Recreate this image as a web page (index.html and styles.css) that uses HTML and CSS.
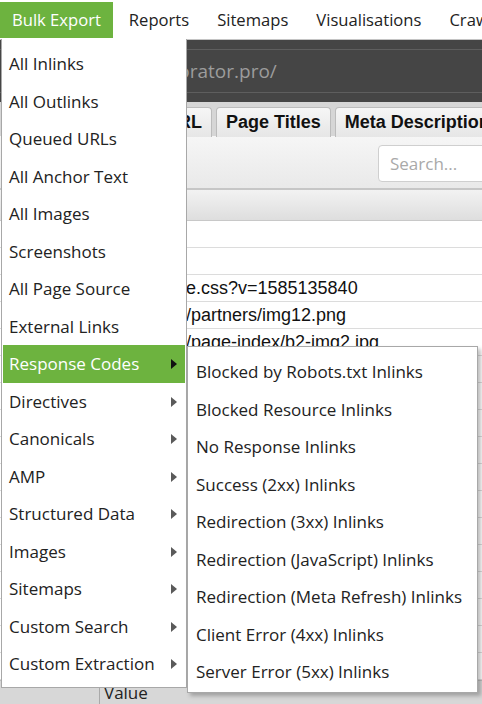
FILE: index.html
```html
<!DOCTYPE html>
<html>
<head>
<meta charset="utf-8">
<link rel="stylesheet" href="styles.css">
</head>
<body>
<div class="app">
  <nav class="menubar">
    <div class="mb-item active">Bulk Export</div>
    <div class="mb-item">Reports</div>
    <div class="mb-item">Sitemaps</div>
    <div class="mb-item">Visualisations</div>
    <div class="mb-item">Crawl Analysis</div>
  </nav>
  <div class="darkbar">
    <div class="address">collaborator.pro/</div>
  </div>
  <div class="tabs">
    <div class="tab">URL</div>
    <div class="tab">Page Titles</div>
    <div class="tab">Meta Description</div>
  </div>
  <div class="toolbar">
    <div class="search">Search...</div>
  </div>
  <div class="thead"></div>
  <div class="rows">
    <div class="row"><span class="num"></span><span class="addr"></span></div>
    <div class="row"><span class="num"></span><span class="addr"></span></div>
    <div class="row"><span class="num"></span><span class="addr">e.css?v=1585135840</span></div>
    <div class="row"><span class="num"></span><span class="addr">/partners/img12.png</span></div>
    <div class="row"><span class="num"></span><span class="addr">/page-index/b2-img2.jpg</span></div>
    <div class="row"><span class="num"></span><span class="addr"></span></div>
    <div class="row"><span class="num"></span><span class="addr"></span></div>
    <div class="row"><span class="num"></span><span class="addr"></span></div>
    <div class="row"><span class="num"></span><span class="addr"></span></div>
    <div class="row"><span class="num"></span><span class="addr"></span></div>
    <div class="row"><span class="num"></span><span class="addr"></span></div>
    <div class="row"><span class="num"></span><span class="addr"></span></div>
    <div class="row"><span class="num"></span><span class="addr"></span></div>
    <div class="row"><span class="num"></span><span class="addr"></span></div>
    <div class="row"><span class="num"></span><span class="addr"></span></div>
    <div class="row"><span class="num"></span><span class="addr"></span></div>
    <div class="row"><span class="num"></span><span class="addr"></span></div>
  </div>
  <div class="lower">
    <div class="lcol name"></div>
    <div class="lcol">Value</div>
  </div>

  <ul class="menu main">
    <li>All Inlinks</li>
    <li>All Outlinks</li>
    <li>Queued URLs</li>
    <li>All Anchor Text</li>
    <li>All Images</li>
    <li>Screenshots</li>
    <li>All Page Source</li>
    <li>External Links</li>
    <li class="sub hl">Response Codes</li>
    <li class="sub">Directives</li>
    <li class="sub">Canonicals</li>
    <li class="sub">AMP</li>
    <li class="sub">Structured Data</li>
    <li class="sub">Images</li>
    <li class="sub">Sitemaps</li>
    <li class="sub">Custom Search</li>
    <li class="sub">Custom Extraction</li>
  </ul>
  <ul class="menu submenu">
    <li>Blocked by Robots.txt Inlinks</li>
    <li>Blocked Resource Inlinks</li>
    <li>No Response Inlinks</li>
    <li>Success (2xx) Inlinks</li>
    <li>Redirection (3xx) Inlinks</li>
    <li>Redirection (JavaScript) Inlinks</li>
    <li>Redirection (Meta Refresh) Inlinks</li>
    <li>Client Error (4xx) Inlinks</li>
    <li>Server Error (5xx) Inlinks</li>
  </ul>
</div>
</body>
</html>
```
FILE: styles.css
```css
html, body {
  margin: 0;
  padding: 0;
  background: #fff;
}
.app {
  position: relative;
  width: 482px;
  height: 704px;
  overflow: hidden;
  font-family: "Open Sans", "Noto Sans", sans-serif;
  color: #222;
}
.menubar {
  display: flex;
  gap: 4px;
  height: 37px;
  padding-top: 2px;
  border-bottom: 1px solid #c4c4c4;
  background: #fff;
  white-space: nowrap;
}
.mb-item {
  padding: 0 12px;
  height: 36px;
  line-height: 36px;
  font-size: 16.6px;
  color: #222;
}
.mb-item.active {
  background: #6db33f;
  color: #fff;
}
.darkbar {
  height: 62px;
  box-sizing: border-box;
  background: #454545;
  padding-top: 9px;
}
.address {
  height: 44px;
  box-sizing: border-box;
  border-top: 1px solid #5e5e5e;
  border-bottom: 1px solid #5e5e5e;
  line-height: 42px;
  padding-left: 126px;
  font-size: 19px;
  color: #9c9c9c;
  white-space: nowrap;
}
.tabs {
  display: flex;
  gap: 4px;
  height: 34px;
  padding: 5px 0 0 155px;
  box-sizing: border-box;
  background: #d6d6d6;
  white-space: nowrap;
}
.tab {
  flex: none;
  height: 29px;
  line-height: 29px;
  padding: 0 9px;
  border: 1px solid #bcbcbc;
  border-bottom: none;
  border-radius: 4px 4px 0 0;
  background: linear-gradient(#f6f6f6, #e6e6e6);
  font-family: "Liberation Sans", Arial, sans-serif;
  font-weight: bold;
  font-size: 18px;
  color: #111;
}
.toolbar {
  height: 54px;
  background: linear-gradient(#f6f6f6, #e9e9e9);
  border-bottom: 2px solid #c6c6c6;
  display: flex;
  justify-content: flex-end;
  align-items: flex-start;
  padding-top: 9px;
  box-sizing: border-box;
}
.search {
  width: 110px;
  height: 37px;
  margin-right: -6px;
  box-sizing: border-box;
  background: #fff;
  border: 1px solid #cfcfcf;
  border-radius: 4px;
  padding-left: 11px;
  line-height: 35px;
  font-size: 17px;
  color: #a9a9a9;
}
.thead {
  height: 31px;
  box-sizing: border-box;
  background: linear-gradient(#f2f2f2, #dedede);
  border-bottom: 1px solid #c8c8c8;
}
.row {
  display: flex;
  height: 27px;
  box-sizing: border-box;
  border-bottom: 1px solid #dcdcdc;
  background: #fff;
  font-family: "Liberation Sans", Arial, sans-serif;
  font-size: 18px;
  line-height: 26px;
  white-space: nowrap;
  color: #111;
}
.num {
  width: 186px;
  flex: none;
}
.addr {
  flex: 1;
}
.lower {
  display: flex;
  height: 30px;
  box-sizing: border-box;
  background: #d7d7d7;
  border-top: 1px solid #bdbdbd;
  font-size: 17px;
  line-height: 24px;
}
.lcol {
  padding-left: 4px;
}
.lcol.name {
  width: 95px;
  border-right: 1px solid #a9a9a9;
}

.menu {
  position: absolute;
  margin: 0;
  padding: 6px 0;
  list-style: none;
  background: #fff;
  border: 1px solid #a8a8a8;
  box-sizing: border-box;
  font-size: 17px;
  color: #222;
}
.menu li {
  height: 37.5px;
  line-height: 37.5px;
  padding-left: 8px;
  white-space: nowrap;
  position: relative;
}
.menu.main {
  left: 1px;
  top: 39px;
  width: 186px;
  height: 649px;
  padding: 6px 1px;
  border-top: none;
}
.menu.main li {
  padding-left: 6px;
}
.menu.main li.sub::after {
  content: "";
  position: absolute;
  right: 8px;
  top: 14px;
  border-left: 6px solid #5a5a5a;
  border-top: 5px solid transparent;
  border-bottom: 5px solid transparent;
}
.menu.main li.hl {
  background: #6db33f;
  color: #fff;
}
.menu.main li.hl::after {
  border-left-color: #111;
}
.menu.submenu {
  left: 187px;
  top: 346px;
  width: 291px;
  height: 347px;
  box-shadow: 3px 3px 4px rgba(0,0,0,0.25);
}
```
